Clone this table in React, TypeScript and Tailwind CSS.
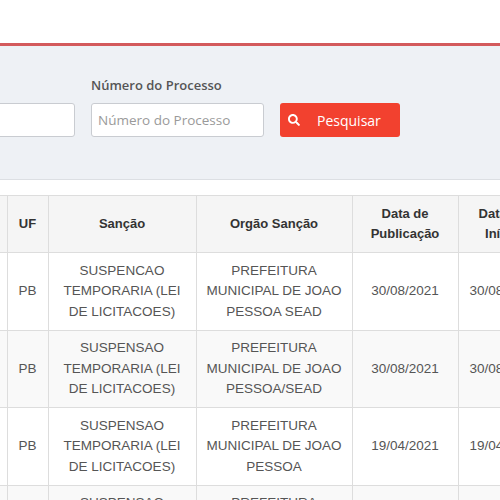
import React from "react";
import { FaSearch } from "react-icons/fa";

const rows = [
  {
    uf: "PB",
    sancao: "SUSPENCAO TEMPORARIA (LEI DE LICITACOES)",
    orgao: "PREFEITURA MUNICIPAL DE JOAO PESSOA SEAD",
    publicacao: "30/08/2021",
    inicio: "30/08/2021",
  },
  {
    uf: "PB",
    sancao: "SUSPENSAO TEMPORARIA (LEI DE LICITACOES)",
    orgao: "PREFEITURA MUNICIPAL DE JOAO PESSOA/SEAD",
    publicacao: "30/08/2021",
    inicio: "30/08/2021",
  },
  {
    uf: "PB",
    sancao: "SUSPENSAO TEMPORARIA (LEI DE LICITACOES)",
    orgao: "PREFEITURA MUNICIPAL DE JOAO PESSOA",
    publicacao: "19/04/2021",
    inicio: "19/04/2021",
  },
  {
    uf: "PB",
    sancao: "SUSPENSAO TEMPORARIA (LEI DE LICITACOES)",
    orgao: "PREFEITURA MUNICIPAL DE JOAO PESSOA",
    publicacao: "19/04/2021",
    inicio: "19/04/2021",
  },
];

export default function App() {
  return (
    <div className="w-[500px] h-[500px] overflow-hidden bg-white">
      <div className="h-[43px]" />

      <div className="border-t-[3px] border-t-[#d35a5c] border-b border-b-[#dcdfe3] bg-[#eef1f5] pt-[30px] pb-[42px] font-['Open_Sans',sans-serif]">
        <div className="flex items-end gap-[16px] -ml-[98px]">
          <input
            className="w-[173px] h-[34px] rounded-[3px] border border-[#c9ccd1] bg-white px-[6px] text-[14px]"
            readOnly
          />
          <div className="flex flex-col">
            <label className="text-[13px] leading-[18px] text-[#555] font-semibold mb-[9px]">
              Número do Processo
            </label>
            <input
              placeholder="Número do Processo"
              className="w-[173px] h-[34px] rounded-[3px] border border-[#c9ccd1] bg-white px-[6px] text-[13.5px] text-[#555] placeholder:text-[#9a9a9a] outline-none"
            />
          </div>
          <button className="flex items-center h-[34px] w-[120px] rounded-[3px] bg-[#f2412f] pl-[8px] text-white text-[14px]">
            <FaSearch className="w-[12px] h-[12px]" />
            <span className="ml-[17px]">Pesquisar</span>
          </button>
        </div>
      </div>

      <div className="h-[15px]" />

      <table className="w-[646px] min-w-[646px] table-fixed border-collapse font-['Liberation_Sans',Arial,sans-serif] text-center">
        <colgroup>
          <col className="w-[7px]" />
          <col className="w-[41px]" />
          <col className="w-[148px]" />
          <col className="w-[156px]" />
          <col className="w-[106px]" />
          <col className="w-[88px]" />
          <col className="w-[100px]" />
        </colgroup>
        <thead>
          <tr className="bg-[#f5f5f5] text-[13px] font-bold text-[#333] leading-5">
            <th className="border border-l-0 border-[#dddddd]" />
            <th className="border border-[#dddddd] py-2">UF</th>
            <th className="border border-[#dddddd] py-2">Sanção</th>
            <th className="border border-[#dddddd] py-2">Orgão Sanção</th>
            <th className="border border-[#dddddd] py-2 px-2">Data de Publicação</th>
            <th className="border border-[#dddddd] py-2 px-2">Data de Início</th>
            <th className="border border-[#dddddd] py-2 px-2">Data Final</th>
          </tr>
        </thead>
        <tbody className="text-[13.5px] text-[#555] leading-[20.5px]">
          {rows.map((r, i) => (
            <tr key={i} className={i % 2 === 1 ? "bg-[#f9f9f9]" : "bg-white"}>
              <td className="border border-l-0 border-[#dddddd]" />
              <td className="border border-[#dddddd] py-[7.5px]">{r.uf}</td>
              <td className="border border-[#dddddd] py-[7.5px] px-[12px]">{r.sancao}</td>
              <td className="border border-[#dddddd] py-[7.5px] px-[8px]">{r.orgao}</td>
              <td className="border border-[#dddddd] py-[7.5px]">{r.publicacao}</td>
              <td className="border border-[#dddddd] py-[7.5px] pl-[11px] text-left">{r.inicio}</td>
              <td className="border border-[#dddddd] py-[7.5px]">{r.inicio}</td>
            </tr>
          ))}
        </tbody>
      </table>
    </div>
  );
}
